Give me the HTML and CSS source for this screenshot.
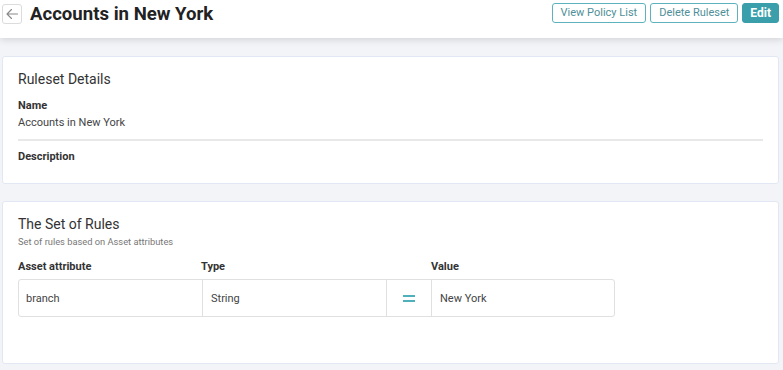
FILE: index.html
```html
<!DOCTYPE html>
<html>
<head>
<meta charset="utf-8">
<link rel="stylesheet" href="styles.css">
</head>
<body>
<header class="topbar">
  <div class="title-group">
    <button class="back-btn" aria-label="Back">
      <svg width="14" height="14" viewBox="0 0 14 14"><path d="M12.5 7H2M6.5 2.5L2 7L6.5 11.5" fill="none" stroke="#888" stroke-width="1.1" stroke-linecap="round" stroke-linejoin="round"/></svg>
    </button>
    <h1 class="page-title">Accounts in New York</h1>
  </div>
  <div class="actions">
    <button class="btn btn-outline">View Policy List</button>
    <button class="btn btn-outline">Delete Ruleset</button>
    <button class="btn btn-primary">Edit</button>
  </div>
</header>
<main class="content">
  <section class="card card-details">
    <h2 class="card-title">Ruleset Details</h2>
    <div class="field-label">Name</div>
    <div class="field-value">Accounts in New York</div>
    <hr class="divider">
    <div class="field-label desc-label">Description</div>
  </section>
  <section class="card card-rules">
    <h2 class="card-title">The Set of Rules</h2>
    <p class="card-subtitle">Set of rules based on Asset attributes</p>
    <div class="rule-grid rule-head">
      <div>Asset attribute</div>
      <div>Type</div>
      <div></div>
      <div>Value</div>
    </div>
    <div class="rule-grid rule-row">
      <div class="cell">branch</div>
      <div class="cell">String</div>
      <div class="cell cell-op"><span class="equals"></span></div>
      <div class="cell">New York</div>
    </div>
  </section>
</main>
</body>
</html>
```
FILE: styles.css
```css
* { box-sizing: border-box; }
html, body { margin: 0; padding: 0; }
body {
  background: #f2f4f8;
  font-family: Roboto, "Liberation Sans", sans-serif;
  color: #333;
  width: 783px;
  height: 370px;
  overflow: hidden;
}
.topbar {
  height: 38px;
  background: #fff;
  display: flex;
  justify-content: space-between;
  align-items: flex-start;
  padding: 3px 4px 0 2px;
  box-shadow: 0 2px 7px rgba(0,0,0,0.13);
  position: relative;
}
.title-group { display: flex; align-items: center; gap: 8px; }
.back-btn {
  width: 20px; height: 20px;
  border: 1px solid #dcdcdc;
  border-radius: 3px;
  background: #fff;
  padding: 0;
  display: flex; align-items: center; justify-content: center;
}
.page-title {
  margin: 0;
  font-size: 18.6px;
  font-weight: 700;
  color: #222;
  line-height: 22px;
}
.actions { display: flex; gap: 4px; }
.btn {
  height: 20px;
  font-family: inherit;
  font-size: 11px;
  border-radius: 3px;
  padding: 0 8px;
  line-height: 18px;
}
.btn-outline {
  background: #fff;
  border: 1px solid #5db3bd;
  color: #4f8f99;
}
.btn-primary {
  background: #3a9fab;
  border: 1px solid #3a9fab;
  color: #fff;
  font-weight: 700;
  font-size: 12px;
  padding: 0 7px;
}
.content {
  padding: 18px 4px 0 2px;
  display: flex;
  flex-direction: column;
  gap: 17px;
}
.card {
  background: #fff;
  border: 1px solid #e2e8f3;
  border-radius: 3px;
}
.card-details { padding: 12px 15px 18px 15px; height: 128px; }
.card-rules { padding: 12px 15px 0 15px; height: 163px; }
.card-title {
  margin: 0;
  font-size: 14px;
  font-weight: 400;
  line-height: 20px;
  color: #333;
}
.card-details .card-title { margin-bottom: 9px; }
.field-label {
  font-size: 11px;
  font-weight: 700;
  line-height: 16px;
  color: #333;
}
.field-value {
  font-size: 11px;
  line-height: 16px;
  color: #444;
  margin-top: 1px;
}
.divider {
  border: 0;
  height: 2px;
  background: #e8e8e8;
  margin: 8px 0 8px 0;
  width: 745px;
}
.card-subtitle {
  margin: 1px 0 0 0;
  font-size: 9.3px;
  line-height: 14px;
  color: #777;
}
.rule-grid {
  display: grid;
  grid-template-columns: 183px 184px 46px 184px;
  width: 597px;
}
.rule-head {
  margin-top: 10px;
  font-size: 11px;
  font-weight: 700;
  line-height: 16px;
  color: #333;
}
.rule-row {
  margin-top: 4px;
  height: 38px;
  border: 1px solid #e0e0e0;
  border-radius: 3px;
}
.cell {
  font-size: 11px;
  color: #444;
  display: flex;
  align-items: center;
  padding-left: 8px;
  border-left: 1px solid #e0e0e0;
}
.cell:first-child { border-left: 0; padding-left: 7px; }
.cell-op { justify-content: center; padding-left: 0; border-right: 1px solid #e0e0e0; }
.cell-op + .cell { border-left: 0; }
.equals {
  width: 12px;
  height: 7px;
  border-top: 2px solid #4fb0bb;
  border-bottom: 2px solid #4fb0bb;
}
```
